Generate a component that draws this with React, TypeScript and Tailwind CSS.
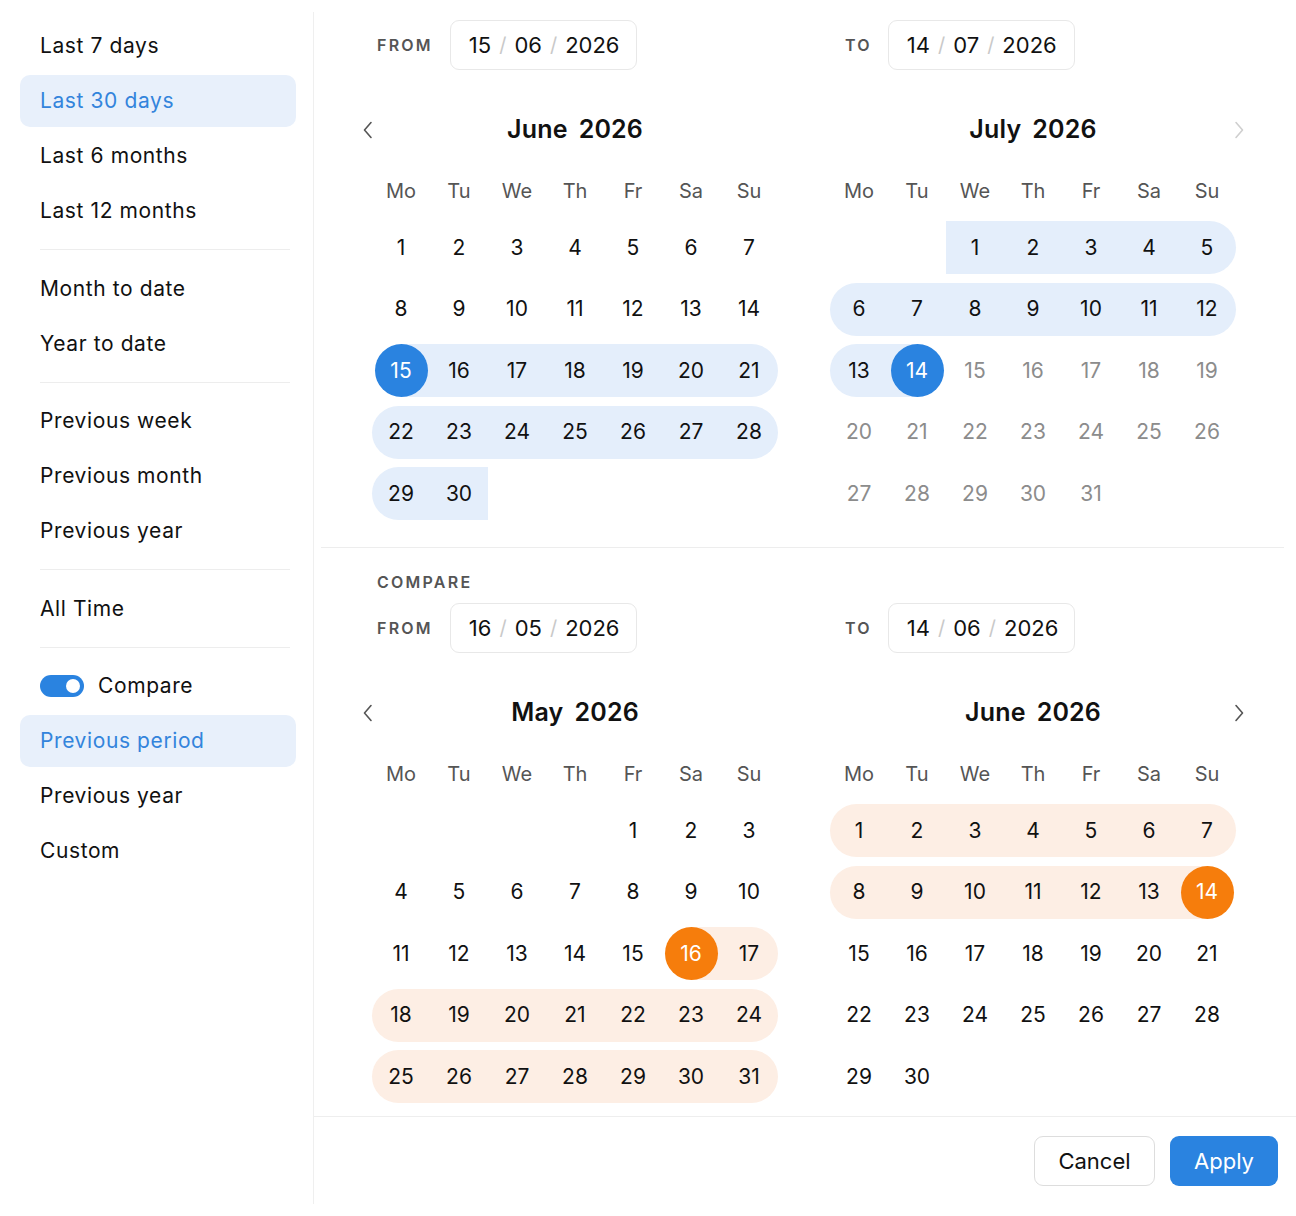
import React from "react";

type Theme = "blue" | "orange";

interface MonthProps {
  name: string;
  year: string;
  offset: number;
  days: number;
  range: { s: number; e: number; startsHere: boolean; endsHere: boolean };
  theme: Theme;
  disabledAfter?: number;
  leftArrow?: "dark" | "light" | null;
  rightArrow?: "dark" | "light" | null;
}

const Chevron = ({ dir, tone }: { dir: "left" | "right"; tone: "dark" | "light" }) => (
  <svg
    width="12"
    height="18"
    viewBox="0 0 12 18"
    fill="none"
    className={tone === "dark" ? "text-[#555555]" : "text-[#cfcfcf]"}
  >
    {dir === "left" ? (
      <path d="M9 1.5 L2.5 9 L9 16.5" stroke="currentColor" strokeWidth="1.6" strokeLinecap="round" strokeLinejoin="round" />
    ) : (
      <path d="M3 1.5 L9.5 9 L3 16.5" stroke="currentColor" strokeWidth="1.6" strokeLinecap="round" strokeLinejoin="round" />
    )}
  </svg>
);

const WEEK = ["Mo", "Tu", "We", "Th", "Fr", "Sa", "Su"];

function Month({ name, year, offset, days, range, theme, disabledAfter, leftArrow, rightArrow }: MonthProps) {
  const cells: Array<{ d: number | null; col: number }> = [];
  for (let i = 0; i < offset; i++) cells.push({ d: null, col: i });
  for (let d = 1; d <= days; d++) cells.push({ d, col: (offset + d - 1) % 7 });

  const rangeBg = theme === "blue" ? "bg-[#e4eefb]" : "bg-[#fdeee4]";
  const dotBg = theme === "blue" ? "bg-[#2a83e0]" : "bg-[#f67d0c]";

  return (
    <div className="w-[406px] flex flex-col">
      <div className="relative h-[40px] flex items-center justify-center">
        {leftArrow && (
          <div className="absolute left-[-10px] top-[11px]">
            <Chevron dir="left" tone={leftArrow} />
          </div>
        )}
        <div className="flex gap-[11px] text-[25px] font-semibold text-[#111111] tracking-[0.2px]">
          <span>{name}</span>
          <span>{year}</span>
        </div>
        {rightArrow && (
          <div className="absolute right-[-9px] top-[11px]">
            <Chevron dir="right" tone={rightArrow} />
          </div>
        )}
      </div>
      <div className="mt-[26px] grid grid-cols-7 h-[30px] items-center">
        {WEEK.map((w) => (
          <div key={w} className="text-center text-[20px] text-[#555555]">
            {w}
          </div>
        ))}
      </div>
      <div className="mt-[15px] grid grid-cols-7 gap-y-[8.5px]">
        {cells.map((c, i) => {
          if (c.d === null) return <div key={i} className="h-[53px]" />;
          const d = c.d;
          const inRange = d >= range.s && d <= range.e;
          const isStart = range.startsHere && d === range.s;
          const isEnd = range.endsHere && d === range.e;
          const roundL = c.col === 0 && !isStart;
          const roundR = c.col === 6 && !isEnd;
          const disabled = disabledAfter !== undefined && d > disabledAfter;
          return (
            <div key={i} className="relative h-[53px] flex items-center justify-center">
              {inRange && (
                <div
                  className={
                    "absolute inset-y-0 " +
                    rangeBg +
                    " " +
                    (isStart ? "left-1/2 right-0" : isEnd ? "left-0 right-1/2" : "left-0 right-0") +
                    " " +
                    (roundL ? "rounded-l-full" : "") +
                    " " +
                    (roundR ? "rounded-r-full" : "")
                  }
                />
              )}
              {(isStart || isEnd) && (
                <div className={"absolute w-[53px] h-[53px] rounded-full " + dotBg} />
              )}
              <span
                className={
                  "relative text-[21px] " +
                  (isStart || isEnd ? "text-white" : disabled ? "text-[#8c8c8c]" : "text-[#111111]")
                }
              >
                {d}
              </span>
            </div>
          );
        })}
      </div>
    </div>
  );
}

const DateInput = ({ d, m, y }: { d: string; m: string; y: string }) => (
  <div className="h-[50px] w-[187px] rounded-[9px] border border-[#e8e8e8] flex items-center pl-[18px] gap-[8px] text-[22px] text-[#111111]">
    <span>{d}</span>
    <span className="text-[#c9c9c9] text-[20px]">/</span>
    <span>{m}</span>
    <span className="text-[#c9c9c9] text-[20px]">/</span>
    <span>{y}</span>
  </div>
);

const Label = ({ children }: { children: React.ReactNode }) => (
  <span className="text-[16px] font-semibold tracking-[0.14em] text-[#555555]">{children}</span>
);

const SideItem = ({ label, active }: { label: string; active?: boolean }) => (
  <div
    className={
      "h-[52px] flex items-center px-5 rounded-[10px] text-[21px] tracking-[0.6px] " +
      (active ? "bg-[#e8f0fb] text-[#3384dc]" : "text-[#111111]")
    }
  >
    {label}
  </div>
);

const Divider = () => <div className="ml-5 mr-[6px] mt-[12px] mb-[12.5px] h-px bg-[#ededed]" />;

export default function App() {
  return (
    <div className="w-[1296px] h-[1216px] bg-white flex font-['Inter',sans-serif] antialiased">
      <aside className="w-[314px] my-3 border-r border-[#efefef] pl-5 pr-[17px] pt-2 flex flex-col">
        <div className="flex flex-col gap-[3px]">
          <SideItem label="Last 7 days" />
          <SideItem label="Last 30 days" active />
          <SideItem label="Last 6 months" />
          <SideItem label="Last 12 months" />
        </div>
        <Divider />
        <div className="flex flex-col gap-[3px]">
          <SideItem label="Month to date" />
          <SideItem label="Year to date" />
        </div>
        <Divider />
        <div className="flex flex-col gap-[3px]">
          <SideItem label="Previous week" />
          <SideItem label="Previous month" />
          <SideItem label="Previous year" />
        </div>
        <Divider />
        <SideItem label="All Time" />
        <Divider />
        <div className="flex flex-col gap-[3px]">
          <div className="h-[52px] flex items-center px-5 gap-[14px] text-[21px] tracking-[0.6px] text-[#111111]">
            <div className="w-[44px] h-[22px] rounded-full bg-[#2a83e0] flex items-center justify-end pr-[4px]">
              <div className="w-[14px] h-[14px] rounded-full bg-white" />
            </div>
            <span>Compare</span>
          </div>
          <SideItem label="Previous period" active />
          <SideItem label="Previous year" />
          <SideItem label="Custom" />
        </div>
      </aside>

      <main className="flex-1 flex flex-col">
        <div className="flex-1 flex flex-col pt-5">
          <div className="pl-[58px] flex gap-[52px]">
            <div className="w-[406px] flex flex-col">
              <div className="h-[50px] flex items-center pl-[5px] gap-[17px]">
                <Label>FROM</Label>
                <DateInput d="15" m="06" y="2026" />
              </div>
              <div className="mt-[40px]">
                <Month
                  name="June"
                  year="2026"
                  offset={0}
                  days={30}
                  range={{ s: 15, e: 30, startsHere: true, endsHere: false }}
                  theme="blue"
                  leftArrow="dark"
                />
              </div>
            </div>
            <div className="w-[406px] flex flex-col">
              <div className="h-[50px] flex items-center pl-[15px] gap-[16px]">
                <Label>TO</Label>
                <DateInput d="14" m="07" y="2026" />
              </div>
              <div className="mt-[40px]">
                <Month
                  name="July"
                  year="2026"
                  offset={2}
                  days={31}
                  range={{ s: 1, e: 14, startsHere: false, endsHere: true }}
                  theme="blue"
                  disabledAfter={14}
                  rightArrow="light"
                />
              </div>
            </div>
          </div>

          <div className="mt-[27px] ml-[7px] mr-[12px] h-px bg-[#ededed]" />

          <div className="pl-[58px] mt-[24px]">
            <div className="h-[20px] flex items-center pl-[5px]">
              <Label>COMPARE</Label>
            </div>
          </div>
          <div className="pl-[58px] flex gap-[52px] mt-[11px]">
            <div className="w-[406px] flex flex-col">
              <div className="h-[50px] flex items-center pl-[5px] gap-[17px]">
                <Label>FROM</Label>
                <DateInput d="16" m="05" y="2026" />
              </div>
              <div className="mt-[40px]">
                <Month
                  name="May"
                  year="2026"
                  offset={4}
                  days={31}
                  range={{ s: 16, e: 31, startsHere: true, endsHere: false }}
                  theme="orange"
                  leftArrow="dark"
                />
              </div>
            </div>
            <div className="w-[406px] flex flex-col">
              <div className="h-[50px] flex items-center pl-[15px] gap-[16px]">
                <Label>TO</Label>
                <DateInput d="14" m="06" y="2026" />
              </div>
              <div className="mt-[40px]">
                <Month
                  name="June"
                  year="2026"
                  offset={0}
                  days={30}
                  range={{ s: 1, e: 14, startsHere: false, endsHere: true }}
                  theme="orange"
                  rightArrow="dark"
                />
              </div>
            </div>
          </div>
        </div>

        <div className="h-[100px] border-t border-[#eeeeee] flex items-start justify-end pt-[19px] pr-[18px] gap-[15px]">
          <button className="h-[50px] w-[121px] rounded-[9px] border border-[#dddddd] bg-white text-[22px] text-[#111111]">
            Cancel
          </button>
          <button className="h-[50px] w-[108px] rounded-[9px] bg-[#2a83e0] text-[22px] text-white">
            Apply
          </button>
        </div>
      </main>
    </div>
  );
}
